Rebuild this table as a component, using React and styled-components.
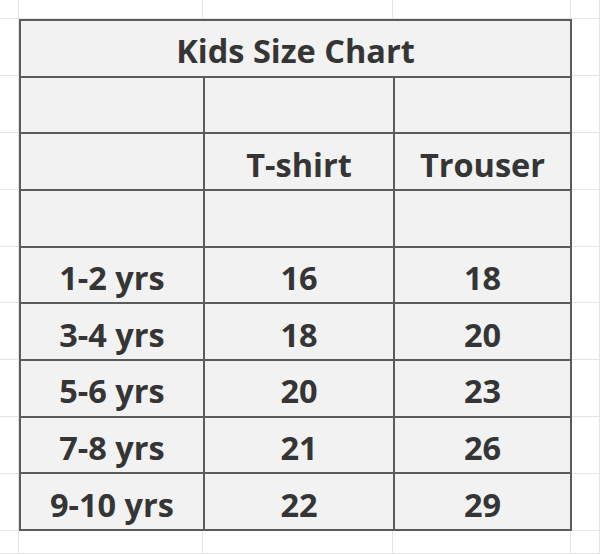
import React from "react";
import styled, { createGlobalStyle } from "styled-components";

const GlobalStyle = createGlobalStyle`
  html, body {
    margin: 0;
    padding: 0;
    background: #ffffff;
  }
  body {
    font-family: "Open Sans", "Liberation Sans", sans-serif;
  }
`;

const Sheet = styled.div`
  display: grid;
  grid-template-columns: 19px 184px 190px 178px 1fr;
  grid-template-rows: 19px repeat(9, 56.9px) 1fr;
  width: 600px;
  height: 554px;
  overflow: hidden;
  background: #ffffff;
`;

const GridCell = styled.div`
  grid-row: ${(p) => p.$row + 1};
  grid-column: ${(p) => p.$col + 1};
  box-shadow: inset -1px -1px 0 #e4e4e4;
`;

const Table = styled.div`
  grid-row: 2 / 11;
  grid-column: 2 / 5;
  display: grid;
  grid-template-columns: 182px 188px 1fr;
  grid-template-rows: repeat(9, 1fr);
  gap: 2px;
  padding: 2px;
  margin: 0 -1px 0 0;
  background: #5b5b5b;
  z-index: 1;
`;

const Cell = styled.div`
  grid-column: ${(p) => (p.$span ? `span ${p.$span}` : "auto")};
  background: #f2f2f2;
  display: flex;
  align-items: flex-end;
  justify-content: center;
  padding-bottom: 8px;
  font-size: 32.5px;
  line-height: 1;
  font-weight: 700;
  color: #353535;
`;

const rows = [
  ["1-2 yrs", "16", "18"],
  ["3-4 yrs", "18", "20"],
  ["5-6 yrs", "20", "23"],
  ["7-8 yrs", "21", "26"],
  ["9-10 yrs", "22", "29"],
];

const background = [];
for (let r = 0; r < 11; r++) {
  for (let c = 0; c < 5; c++) {
    background.push({ r, c });
  }
}

export default function App() {
  return (
    <>
      <GlobalStyle />
      <Sheet>
        {background.map(({ r, c }) => (
          <GridCell key={`${r}-${c}`} $row={r} $col={c} />
        ))}
        <Table>
          <Cell $span={3}>Kids Size Chart</Cell>
          <Cell />
          <Cell />
          <Cell />
          <Cell />
          <Cell>T-shirt</Cell>
          <Cell>Trouser</Cell>
          <Cell />
          <Cell />
          <Cell />
          {rows.map((row) =>
            row.map((value, i) => <Cell key={`${row[0]}-${i}`}>{value}</Cell>)
          )}
        </Table>
      </Sheet>
    </>
  );
}
